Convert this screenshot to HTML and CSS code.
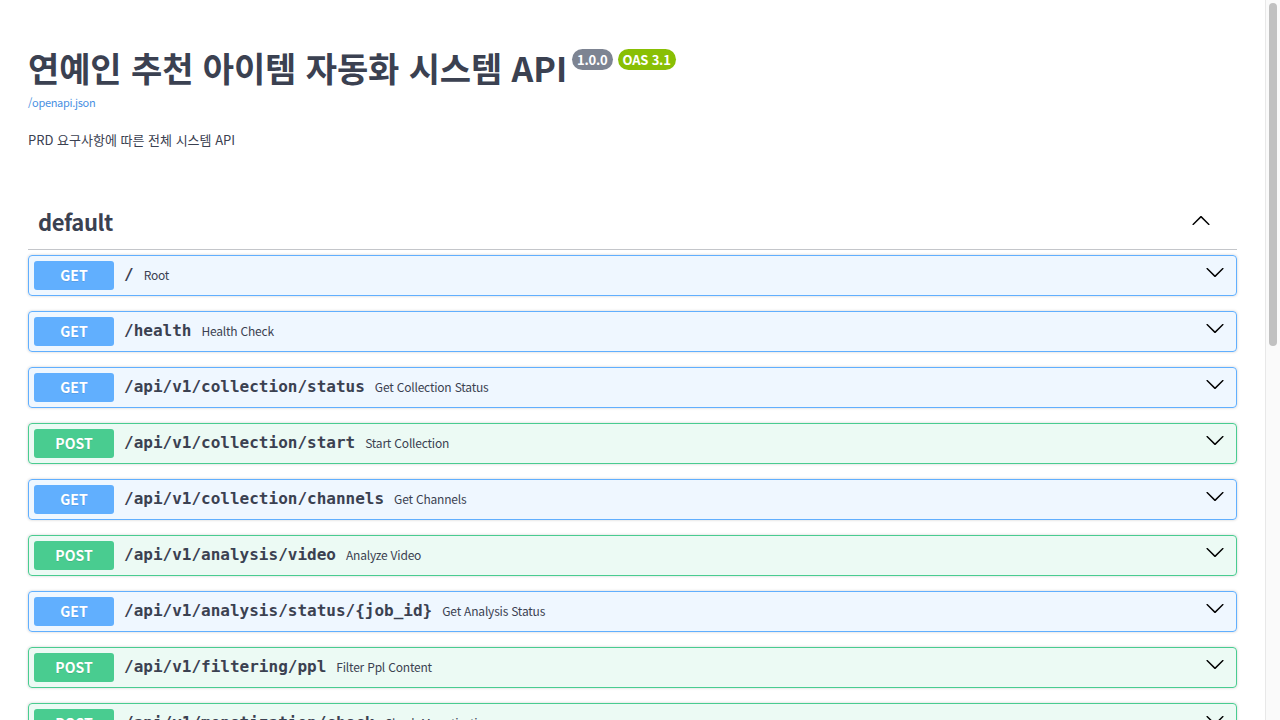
FILE: index.html
```html
<!DOCTYPE html>
<html lang="ko">
<head>
<meta charset="utf-8">
<title>연예인 추천 아이템 자동화 시스템 API - Swagger UI</title>
<link rel="stylesheet" href="styles.css">
</head>
<body>
<svg class="defs" xmlns="http://www.w3.org/2000/svg">
  <symbol id="chev" viewBox="0 0 20 20"><path d="M17.418 6.109c.272-.268.709-.268.979 0s.271.701 0 .969l-7.908 7.83c-.27.268-.707.268-.979 0l-7.908-7.83c-.27-.268-.27-.701 0-.969.271-.268.709-.268.979 0L10 13.25l7.418-7.141z"/></symbol>
</svg>
<div class="swagger">
  <div class="info">
    <div class="title-row">
      <h2 class="title">연예인 추천 아이템 자동화 시스템 API</h2>
      <span class="badge version">1.0.0</span>
      <span class="badge oas">OAS 3.1</span>
    </div>
    <a class="link" href="#">/openapi.json</a>
    <p class="desc">PRD 요구사항에 따른 전체 시스템 API</p>
  </div>

  <section class="tag-section">
    <h3 class="tag">
      <span class="tag-name">default</span>
      <svg class="arrow up"><use href="#chev"/></svg>
    </h3>

    <div class="op get"><span class="method">GET</span><span class="path">/</span><span class="summary">Root</span><svg class="arrow"><use href="#chev"/></svg></div>
    <div class="op get"><span class="method">GET</span><span class="path">/health</span><span class="summary">Health Check</span><svg class="arrow"><use href="#chev"/></svg></div>
    <div class="op get"><span class="method">GET</span><span class="path">/api/v1/collection/status</span><span class="summary">Get Collection Status</span><svg class="arrow"><use href="#chev"/></svg></div>
    <div class="op post"><span class="method">POST</span><span class="path">/api/v1/collection/start</span><span class="summary">Start Collection</span><svg class="arrow"><use href="#chev"/></svg></div>
    <div class="op get"><span class="method">GET</span><span class="path">/api/v1/collection/channels</span><span class="summary">Get Channels</span><svg class="arrow"><use href="#chev"/></svg></div>
    <div class="op post"><span class="method">POST</span><span class="path">/api/v1/analysis/video</span><span class="summary">Analyze Video</span><svg class="arrow"><use href="#chev"/></svg></div>
    <div class="op get"><span class="method">GET</span><span class="path">/api/v1/analysis/status/{job_id}</span><span class="summary">Get Analysis Status</span><svg class="arrow"><use href="#chev"/></svg></div>
    <div class="op post"><span class="method">POST</span><span class="path">/api/v1/filtering/ppl</span><span class="summary">Filter Ppl Content</span><svg class="arrow"><use href="#chev"/></svg></div>
    <div class="op post"><span class="method">POST</span><span class="path">/api/v1/monetization/check</span><span class="summary">Check Monetization</span><svg class="arrow"><use href="#chev"/></svg></div>
    <div class="op get"><span class="method">GET</span><span class="path">/api/v1/monetization/stats</span><span class="summary">Get Monetization Stats</span><svg class="arrow"><use href="#chev"/></svg></div>
    <div class="op get"><span class="method">GET</span><span class="path">/api/v1/candidates</span><span class="summary">Get Candidates</span><svg class="arrow"><use href="#chev"/></svg></div>
    <div class="op post"><span class="method">POST</span><span class="path">/api/v1/candidates/{candidate_id}/approve</span><span class="summary">Approve Candidate</span><svg class="arrow"><use href="#chev"/></svg></div>
    <div class="op post"><span class="method">POST</span><span class="path">/api/v1/candidates/{candidate_id}/reject</span><span class="summary">Reject Candidate</span><svg class="arrow"><use href="#chev"/></svg></div>
    <div class="op get"><span class="method">GET</span><span class="path">/api/v1/dashboard/summary</span><span class="summary">Get Dashboard Summary</span><svg class="arrow"><use href="#chev"/></svg></div>
  </section>

  <section class="models">
    <h4 class="models-title"><span>Schemas</span><svg class="arrow up"><use href="#chev"/></svg></h4>
    <div class="model">AnalysisRequest</div>
    <div class="model">CollectionRequest</div>
    <div class="model">HTTPValidationError</div>
    <div class="model">ValidationError</div>
  </section>
</div>
<div class="scrollbar"><div class="thumb"></div></div>
</body>
</html>
```
FILE: styles.css
```css
body {
  margin: 0;
  background: #fff;
  font-family: "Noto Sans CJK KR", "Noto Sans", sans-serif;
  color: #3b4151;
}

.defs {
  display: none;
}

.swagger {
  margin: 8px 23px 8px 8px;
  padding: 0 20px;
}

.info {
  margin: 50px 0 0;
}

.title-row {
  display: flex;
  align-items: flex-start;
  gap: 5px;
}

.title {
  margin: -2px 0 0;
  font-size: 34px;
  font-weight: 700;
  line-height: 40px;
  letter-spacing: -0.1px;
  color: #3b4151;
}

.badge {
  margin-top: -1px;
  color: #fff;
  font-size: 13px;
  font-weight: 700;
  line-height: 21px;
  padding: 0 5px;
  border-radius: 57px;
  letter-spacing: -0.2px;
}

.badge.version {
  background: #7d8492;
}

.badge.oas {
  background: #89bf04;
}

.link {
  display: block;
  margin-top: 6px;
  font-size: 11px;
  line-height: 16px;
  letter-spacing: -0.3px;
  color: #4990e2;
  text-decoration: none;
}

.desc {
  margin: 20px 0 0;
  font-size: 13px;
  line-height: 20px;
}

.tag-section {
  margin-top: 43px;
}

.tag {
  display: flex;
  align-items: center;
  justify-content: space-between;
  margin: 0 0 5px;
  padding: 10px 26px 10px 10px;
  border-bottom: 1px solid rgba(59, 65, 81, 0.3);
  font-size: 22px;
  font-weight: 700;
  line-height: 36px;
  letter-spacing: -0.4px;
}

.arrow {
  width: 20px;
  height: 20px;
  fill: #000;
  flex: none;
}

.arrow.up {
  transform: rotate(180deg);
}

.op {
  display: flex;
  align-items: center;
  padding: 5px;
  margin: 0 0 15px;
  border: 1px solid;
  border-radius: 4px;
  box-shadow: 0 0 3px rgba(0, 0, 0, 0.19);
}

.op.get {
  background: rgba(97, 175, 254, 0.1);
  border-color: #61affe;
}

.op.post {
  background: rgba(73, 204, 144, 0.1);
  border-color: #49cc90;
}

.method {
  min-width: 80px;
  padding: 6px 0;
  border-radius: 3px;
  font-size: 14px;
  font-weight: 700;
  line-height: 17px;
  text-align: center;
  color: #fff;
  text-shadow: 0 1px 0 rgba(0, 0, 0, 0.1);
}

.get .method {
  background: #61affe;
}

.post .method {
  background: #49cc90;
}

.path {
  padding: 0 10px;
  font-family: "DejaVu Sans Mono", monospace;
  font-size: 16px;
  font-weight: 700;
  margin-bottom: 2px;
}

.summary {
  flex: 1;
  font-size: 12px;
  letter-spacing: -0.2px;
  margin-bottom: 3px;
}

.op .arrow {
  margin: 0 6px 8px 0;
}

.models {
  margin: 30px 0;
  border: 1px solid rgba(59, 65, 81, 0.3);
  border-radius: 4px;
}

.models-title {
  display: flex;
  justify-content: space-between;
  align-items: center;
  margin: 0;
  padding: 10px 20px 10px 10px;
  font-size: 16px;
}

.model {
  margin: 0 20px 15px;
  padding: 12px;
  background: rgba(0, 0, 0, 0.05);
  border-radius: 4px;
  font-size: 16px;
  font-weight: 700;
}

.scrollbar {
  position: fixed;
  top: 0;
  right: 0;
  width: 14px;
  height: 100vh;
  background: #fafafa;
  border-left: 1px solid #e8e8e8;
}

.thumb {
  margin: 3px 0 0 3px;
  width: 8px;
  height: 343px;
  border-radius: 4px;
  background: #c1c1c1;
}
```
